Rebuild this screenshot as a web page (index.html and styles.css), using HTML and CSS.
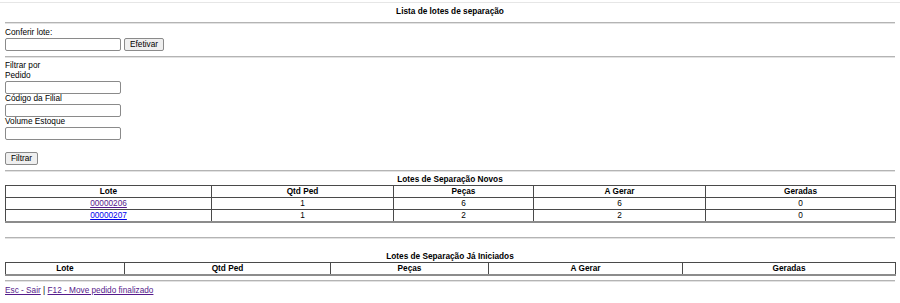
FILE: index.html
```html
<!DOCTYPE html>
<html lang="pt-BR">
<head>
    <meta charset="UTF-8">
    <title>Lista de lotes de separação</title>
    <link rel="stylesheet" href="styles.css">
</head>
<body>
    <div class="topline"></div>
    <div class="content">
        <h3 class="title">Lista de lotes de separação</h3>
        <hr>
        <form class="conferir">
            <label class="lbl">Conferir lote:</label>
            <div class="row">
                <input type="text" class="txt">
                <button type="button" class="btn">Efetivar</button>
            </div>
        </form>
        <hr>
        <form class="filtro">
            <div class="lbl">Filtrar por</div>
            <label class="lbl">Pedido</label>
            <input type="text" class="txt">
            <label class="lbl">Código da Filial</label>
            <input type="text" class="txt">
            <label class="lbl">Volume Estoque</label>
            <input type="text" class="txt">
            <div class="row gap">
                <button type="button" class="btn">Filtrar</button>
            </div>
        </form>
        <hr>
        <div class="caption">Lotes de Separação Novos</div>
        <table class="grid novos">
            <colgroup>
                <col class="n1"><col class="n2"><col class="n3"><col class="n4"><col class="n5">
            </colgroup>
            <tr><th>Lote</th><th>Qtd Ped</th><th>Peças</th><th>A Gerar</th><th>Geradas</th></tr>
            <tr><td><a href="#" class="visited">00000206</a></td><td>1</td><td>6</td><td>6</td><td>0</td></tr>
            <tr><td><a href="#">00000207</a></td><td>1</td><td>2</td><td>2</td><td>0</td></tr>
        </table>
        <hr class="spaced">
        <div class="caption spaced">Lotes de Separação Já Iniciados</div>
        <table class="grid iniciados">
            <colgroup>
                <col class="i1"><col class="i2"><col class="i3"><col class="i4"><col class="i5">
            </colgroup>
            <tr><th>Lote</th><th>Qtd Ped</th><th>Peças</th><th>A Gerar</th><th>Geradas</th></tr>
        </table>
        <hr class="tight">
        <p class="footer"><a href="#" class="visited">Esc - Sair</a> | <a href="#" class="visited">F12 - Move pedido finalizado</a></p>
    </div>
</body>
</html>
```
FILE: styles.css
```css
html, body {
    margin: 0;
    padding: 0;
    background: #fff;
}
body {
    font-family: "Liberation Sans", Arial, sans-serif;
    font-size: 8.25px;
    line-height: 10px;
    color: #000;
}
.topline {
    margin-top: 2px;
    border-bottom: 1px solid #e6e6e6;
}
.content {
    padding: 0 5px;
}
.title {
    margin: 4px 0 0;
    font-size: 8.25px;
    font-weight: bold;
    text-align: center;
}
hr {
    height: 0;
    margin: 5px 0 0;
    border: 0;
    border-top: 1px solid #b4b4b4;
    border-bottom: 1px solid #e2e2e2;
}
hr.spaced {
    margin-top: 14px;
}
hr.tight {
    margin-top: 4px;
}
form {
    margin: 0;
}
.lbl {
    display: block;
}
.conferir {
    padding-top: 4px;
}
.filtro {
    padding-top: 3px;
}
.row {
    display: flex;
    gap: 3px;
}
.row.gap {
    margin-top: 12px;
}
.txt {
    display: block;
    box-sizing: border-box;
    width: 116px;
    height: 13px;
    margin: 0;
    padding: 0 2px;
    border: 1px solid #8a8a8a;
    border-radius: 2px;
    font: inherit;
}
.btn {
    box-sizing: border-box;
    height: 13px;
    margin: 0;
    padding: 0 5px;
    background: #efefef;
    border: 1px solid #8a8a8a;
    border-radius: 2px;
    font-family: inherit;
    font-size: 8.25px;
    line-height: 10px;
    color: #000;
}
.caption {
    margin-top: 3px;
    font-weight: bold;
    text-align: center;
}
.caption.spaced {
    margin-top: 13px;
}
.grid {
    width: 100%;
    table-layout: fixed;
    border-collapse: collapse;
    border: 1px solid #4a4a4a;
    border-bottom: 2px solid #8c8c8c;
}
.grid th, .grid td {
    padding: 1px 1px 0;
    height: 12px;
    box-sizing: border-box;
    border: 1px solid #4a4a4a;
    text-align: center;
    line-height: 10px;
    font-size: 8.25px;
}
.grid tr:last-child td, .grid tr:last-child th {
    border-bottom: 2px solid #8c8c8c;
}
.grid th {
    font-weight: bold;
}
.n1 { width: 206px; }
.n2 { width: 182px; }
.n3 { width: 140px; }
.n4 { width: 172px; }
.n5 { width: 190px; }
.i1 { width: 119px; }
.i2 { width: 206px; }
.i3 { width: 158px; }
.i4 { width: 194px; }
.i5 { width: 213px; }
a {
    color: #0000ee;
}
a.visited {
    color: #551a8b;
}
.footer {
    margin: 4px 0 0;
}
```
